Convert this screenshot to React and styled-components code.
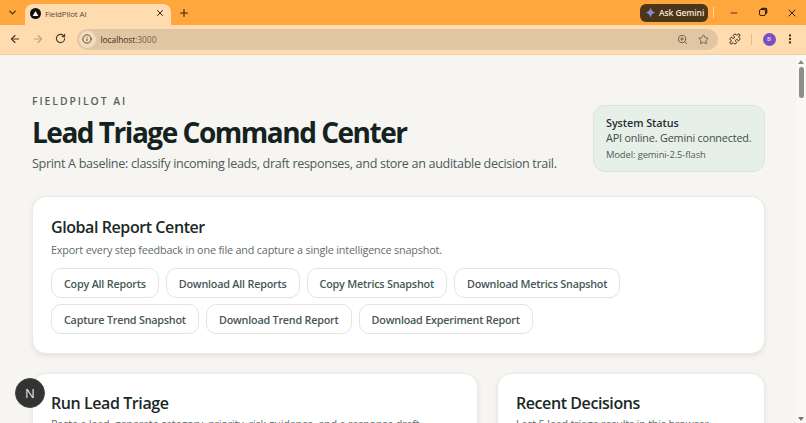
import React from 'react';
import styled, { createGlobalStyle } from 'styled-components';
import { ArrowLeft, ArrowRight, RotateCw, Info, ZoomIn, Star, Puzzle, EllipsisVertical, ChevronDown, X, Plus, Minus } from 'lucide-react';

const Global = createGlobalStyle`
  html, body { margin: 0; padding: 0; height: 423px; overflow: hidden; }
  body { font-family: "Open Sans", "Noto Sans", sans-serif; background: #f6f5f1; }
  * { box-sizing: border-box; }
`;
const Shell = styled.div`
  width: 806px; height: 423px; display: flex; flex-direction: column; overflow: hidden;
`;
const TabStrip = styled.div`
  height: 25px; flex: none; background: #ffa63d; display: flex; align-items: flex-end; position: relative;
`;
const TabMenu = styled.div`
  width: 25px; height: 25px; display: flex; align-items: center; justify-content: center; color: #3a2a10;
`;
const Tab = styled.div`
  width: 146px; height: 21px; background: #ffdcb0; border-radius: 8px 8px 0 0;
  display: flex; align-items: center; padding: 0 6px 3px 5px; gap: 4px;
  font: 400 8px "Open Sans", sans-serif; letter-spacing: -0.15px; color: #5a4a35;
`;
const Favicon = styled.span`
  width: 11px; height: 11px; border-radius: 50%; background: #111; display: flex; align-items: center; justify-content: center; flex: none;
`;
const TabTitle = styled.span`
  flex: 1; white-space: nowrap;
`;
const NewTab = styled.div`
  width: 25px; display: flex; justify-content: center; align-self: center; color: #3a2a10;
`;
const StripRight = styled.div`
  margin-left: auto; height: 25px; display: flex; align-items: center;
`;
const Gemini = styled.div`
  width: 68px; height: 18px; border-radius: 6px; background: #4d3519; color: #f6e6d0;
  display: flex; align-items: center; gap: 3px; padding-left: 5px; font: 600 8.5px "Open Sans", sans-serif; letter-spacing: -0.1px; white-space: nowrap;
`;
const StripDivider = styled.span`
  width: 1px; height: 11px; background: #ffd79f; margin-left: 5px; margin-right: 5px;
`;
const WinButton = styled.div`
  width: 29px; display: flex; align-items: center; justify-content: center; color: #33230c;
`;
const RestoreIcon = styled.span`
  width: 7px; height: 7px; border: 1.5px solid #33230c; border-radius: 2px; box-shadow: 1.5px -1.5px 0 -0.2px #33230c;
`;
const Toolbar = styled.div`
  height: 30px; flex: none; background: #ffdcb0; border-bottom: 1px solid #f0cfa2; display: flex; align-items: center; padding-bottom: 1px;
`;
const NavButton = styled.div`
  width: 22.5px; display: flex; justify-content: center; color: ${p => p.$dim ? '#b5a184' : '#4a3a25'};
`;
const NavGroup = styled.div`
  display: flex; padding-left: 4px; margin-right: 5px;
`;
const Omnibox = styled.div`
  width: 641px; height: 21px; border-radius: 11px; background: #e0c6a2; display: flex; align-items: center; font: 400 8.5px "Open Sans", sans-serif; letter-spacing: -0.1px; color: #3f3223;
`;
const InfoChip = styled.span`
  width: 17px; height: 17px; margin-left: 2px; margin-right: 5px; border-radius: 50%; background: #f3dcbc; display: flex; align-items: center; justify-content: center; color: #3f3223;
`;
const Port = styled.span`color: #75644c;`;
const OmniRight = styled.div`
  margin-left: auto; display: flex; gap: 10px; padding-right: 9px; color: #6a5a45;
`;
const ToolRight = styled.div`
  display: flex; align-items: center; margin-left: 11px; color: #3a2a10;
`;
const ToolDivider = styled.span`
  width: 1px; height: 11px; background: #f3b878; margin: 0 11px 0 10px;
`;
const Avatar = styled.span`
  width: 13px; height: 13px; border-radius: 50%; background: #7a4fc0; color: #e8d8f4; font: 600 6px "Open Sans", sans-serif; display: flex; align-items: center; justify-content: center; margin-right: 8px;
`;
const Viewport = styled.div`
  flex: 1; display: flex; min-height: 0; background: #f6f5f1;
`;
const Page = styled.main`
  flex: 1; min-width: 0; overflow: hidden; padding: 40px 31px 0 32px;
`;
const Scrollbar = styled.div`
  width: 10px; flex: none; background: #f9f8f5; display: flex; flex-direction: column; align-items: center; position: relative; padding-top: 5px;
`;
const ArrowUp = styled.span`
  width: 0; height: 0; border-left: 3px solid transparent; border-right: 3px solid transparent; border-bottom: 4px solid #8a8a88;
`;
const ArrowDownMark = styled.span`
  position: absolute; bottom: 2px; width: 0; height: 0; border-left: 3px solid transparent; border-right: 3px solid transparent; border-top: 4px solid #777;
`;
const Thumb = styled.div`
  width: 5px; height: 31px; border-radius: 3px; background: #8e8e8c; margin-top: 3px;
`;
const Hero = styled.header`
  display: flex; justify-content: space-between; align-items: flex-start;
`;
const HeroText = styled.div`
  display: flex; flex-direction: column;
`;
const Eyebrow = styled.div`
  font: 600 10.4px/13px "Open Sans", sans-serif; letter-spacing: 1.95px; color: #56625f;
`;
const Title = styled.h1`
  margin: 4px 0 0; font: 700 28px/40px "Open Sans", sans-serif; letter-spacing: -1.48px; color: #142220; white-space: nowrap;
`;
const Subtitle = styled.p`
  margin: 3px 0 0; font: 400 12.6px/18px "Open Sans", sans-serif; letter-spacing: -0.33px; color: #4d5a58; white-space: nowrap;
`;
const StatusCard = styled.aside`
  width: 172px; height: 67px; margin-top: 10px; border-radius: 12px; background: #e7efe9; border: 1px solid #d8e4dc; padding: 9px 12px;
`;
const StatusTitle = styled.div`
  font: 600 10.8px/15px "Open Sans", sans-serif; letter-spacing: -0.05px; color: #1f2f2c; white-space: nowrap;
`;
const StatusLine = styled.div`
  font: 400 10.8px/16px "Open Sans", sans-serif; letter-spacing: -0.17px; color: #3c4c49; white-space: nowrap;
`;
const StatusModel = styled.div`
  margin-top: 2px; font: 400 9.4px/14px "Open Sans", sans-serif; letter-spacing: -0.1px; color: #4d5d5a; white-space: nowrap;
`;
const Card = styled.section`
  background: #fff; border: 1px solid #eceae5; border-radius: 14px; box-shadow: 0 2px 5px rgba(40,40,30,.09);
`;
const ReportCard = styled(Card)`
  margin-top: 23px; height: 158px; padding: 18px 18px;
`;
const CardTitle = styled.h2`
  margin: 0; font: 600 16px/24px "Open Sans", sans-serif; letter-spacing: -0.42px; color: #1a2826; white-space: nowrap;
`;
const CardText = styled.p`
  margin: 3px 0 0; font: 400 10.8px/16px "Open Sans", sans-serif; letter-spacing: -0.17px; color: #5f6b69; white-space: nowrap;
`;
const Buttons = styled.div`
  margin-top: 10px; display: flex; flex-wrap: wrap; gap: 6px 7px;
`;
const Button = styled.button`
  height: 30px; padding: 0 12px; border-radius: 10px; border: 1px solid #e3e5e2; background: #fff; font: 600 10.8px "Open Sans", sans-serif; letter-spacing: -0.22px; color: #465755; white-space: nowrap;
`;
const Columns = styled.div`
  margin-top: 19px; display: grid; grid-template-columns: 446px 268px; gap: 19px;
`;
const PanelCard = styled(Card)`
  height: 120px; padding: 17px 18px;
`;
const Cut = styled.p`
  margin: 1px 0 0; font: 400 10.8px/16px "Open Sans", sans-serif; letter-spacing: -0.17px; color: #5f6b69; white-space: nowrap;
`;
const DevBadge = styled.div`
  position: absolute; left: 15px; top: 378px; width: 30px; height: 30px; border-radius: 50%; background: #333; border: 1px solid #444; color: #e8e8e8; display: flex; align-items: center; justify-content: center; font: 400 13px "Open Sans", sans-serif;
`;

const GeminiMark = () => (
  <svg width="11" height="11" viewBox="0 0 24 24" aria-hidden="true">
    <path d="M12 1c1 6 5 10 11 11-6 1-10 5-11 11-1-6-5-10-11-11 6-1 10-5 11-11z" fill="#6a9bea" />
    <path d="M12 1c1 6 5 10 11 11H12z" fill="#e06a6a" opacity=".75" />
    <path d="M1 12c6-1 10-5 11-11v11z" fill="#9a6ce0" opacity=".7" />
  </svg>
);

const reports = ['Copy All Reports', 'Download All Reports', 'Copy Metrics Snapshot', 'Download Metrics Snapshot', 'Capture Trend Snapshot', 'Download Trend Report', 'Download Experiment Report'];

export default function App() {
  return (
    <Shell>
      <Global />
      <TabStrip>
        <TabMenu><ChevronDown size={11} strokeWidth={2.4} /></TabMenu>
        <Tab>
          <Favicon><svg width="7" height="7" viewBox="0 0 10 10"><path d="M5 1.5 9 8.5H1z" fill="#fff" /></svg></Favicon>
          <TabTitle>FieldPilot AI</TabTitle>
          <X size={10} strokeWidth={2.4} color="#33230c" />
        </Tab>
        <NewTab><Plus size={12} strokeWidth={2.2} /></NewTab>
        <StripRight>
          <Gemini><GeminiMark />Ask Gemini</Gemini>
          <StripDivider />
          <WinButton><Minus size={10} strokeWidth={2} /></WinButton>
          <WinButton><RestoreIcon /></WinButton>
          <WinButton><X size={12} strokeWidth={2} /></WinButton>
        </StripRight>
      </TabStrip>
      <Toolbar>
        <NavGroup>
          <NavButton><ArrowLeft size={12} strokeWidth={2.2} /></NavButton>
          <NavButton $dim><ArrowRight size={12} strokeWidth={2.2} /></NavButton>
          <NavButton><RotateCw size={11} strokeWidth={2.4} /></NavButton>
        </NavGroup>
        <Omnibox>
          <InfoChip><Info size={10} strokeWidth={2} /></InfoChip>
          localhost<Port>:3000</Port>
          <OmniRight><ZoomIn size={11} strokeWidth={2} /><Star size={11} strokeWidth={2} /></OmniRight>
        </Omnibox>
        <ToolRight>
          <Puzzle size={12} strokeWidth={2} />
          <ToolDivider />
          <Avatar>B</Avatar>
          <EllipsisVertical size={12} strokeWidth={2.6} />
        </ToolRight>
      </Toolbar>
      <Viewport>
        <Page>
          <Hero>
            <HeroText>
              <Eyebrow>FIELDPILOT AI</Eyebrow>
              <Title>Lead Triage Command Center</Title>
              <Subtitle>Sprint A baseline: classify incoming leads, draft responses, and store an auditable decision trail.</Subtitle>
            </HeroText>
            <StatusCard>
              <StatusTitle>System Status</StatusTitle>
              <StatusLine>API online. Gemini connected.</StatusLine>
              <StatusModel>Model: gemini-2.5-flash</StatusModel>
            </StatusCard>
          </Hero>
          <ReportCard>
            <CardTitle>Global Report Center</CardTitle>
            <CardText>Export every step feedback in one file and capture a single intelligence snapshot.</CardText>
            <Buttons>
              {reports.map(r => <Button key={r}>{r}</Button>)}
            </Buttons>
          </ReportCard>
          <Columns>
            <PanelCard>
              <CardTitle>Run Lead Triage</CardTitle>
              <Cut>Paste a lead, generate category, priority, risk guidance, and a response draft.</Cut>
            </PanelCard>
            <PanelCard>
              <CardTitle>Recent Decisions</CardTitle>
              <Cut>Last 5 lead triage results in this browser.</Cut>
            </PanelCard>
          </Columns>
        </Page>
        <Scrollbar>
          <ArrowUp />
          <Thumb />
          <ArrowDownMark />
        </Scrollbar>
      </Viewport>
      <DevBadge>N</DevBadge>
    </Shell>
  );
}
